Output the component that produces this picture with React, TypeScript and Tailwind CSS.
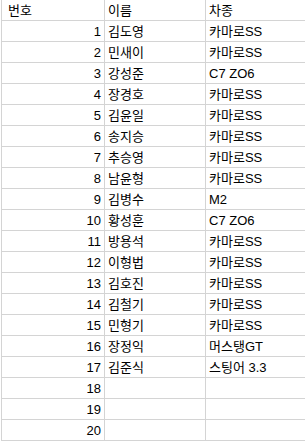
const rows: [string, string][] = [
  ['김도영', '카마로SS'],
  ['민새이', '카마로SS'],
  ['강성준', 'C7 ZO6'],
  ['장경호', '카마로SS'],
  ['김윤일', '카마로SS'],
  ['송지승', '카마로SS'],
  ['추승영', '카마로SS'],
  ['남윤형', '카마로SS'],
  ['김병수', 'M2'],
  ['황성훈', 'C7 ZO6'],
  ['방용석', '카마로SS'],
  ['이형법', '카마로SS'],
  ['김호진', '카마로SS'],
  ['김철기', '카마로SS'],
  ['민형기', '카마로SS'],
  ['장정익', '머스탱GT'],
  ['김준식', '스팅어 3.3'],
  ['', ''],
  ['', ''],
  ['', ''],
];

export default function App() {
  return (
    <div
      className="w-[305px] h-[442px] overflow-hidden bg-white text-[13px] leading-none text-black"
      style={{ fontFamily: '"Liberation Sans", "Noto Sans CJK KR", sans-serif' }}
    >
      <div className="ml-px border-l border-[#d4d4d4]">
        {/* header */}
        <div className="flex h-[21px] border-b border-[#d4d4d4]">
          <div className="w-[103px] border-r border-[#d4d4d4] pl-[6px] flex items-center">번호</div>
          <div className="w-[101px] border-r border-[#d4d4d4] pl-[3px] flex items-center">이름</div>
          <div className="flex-1 pl-[3px] flex items-center">차종</div>
        </div>
        {rows.map(([name, car], i) => (
          <div key={i} className="flex h-[21px] border-b border-[#d4d4d4]">
            <div className="w-[103px] border-r border-[#d4d4d4] pr-[3px] flex items-center justify-end">
              {i + 1}
            </div>
            <div className="w-[101px] border-r border-[#d4d4d4] pl-[3px] flex items-center">{name}</div>
            <div className="flex-1 pl-[3px] flex items-center">{car}</div>
          </div>
        ))}
      </div>
    </div>
  );
}
